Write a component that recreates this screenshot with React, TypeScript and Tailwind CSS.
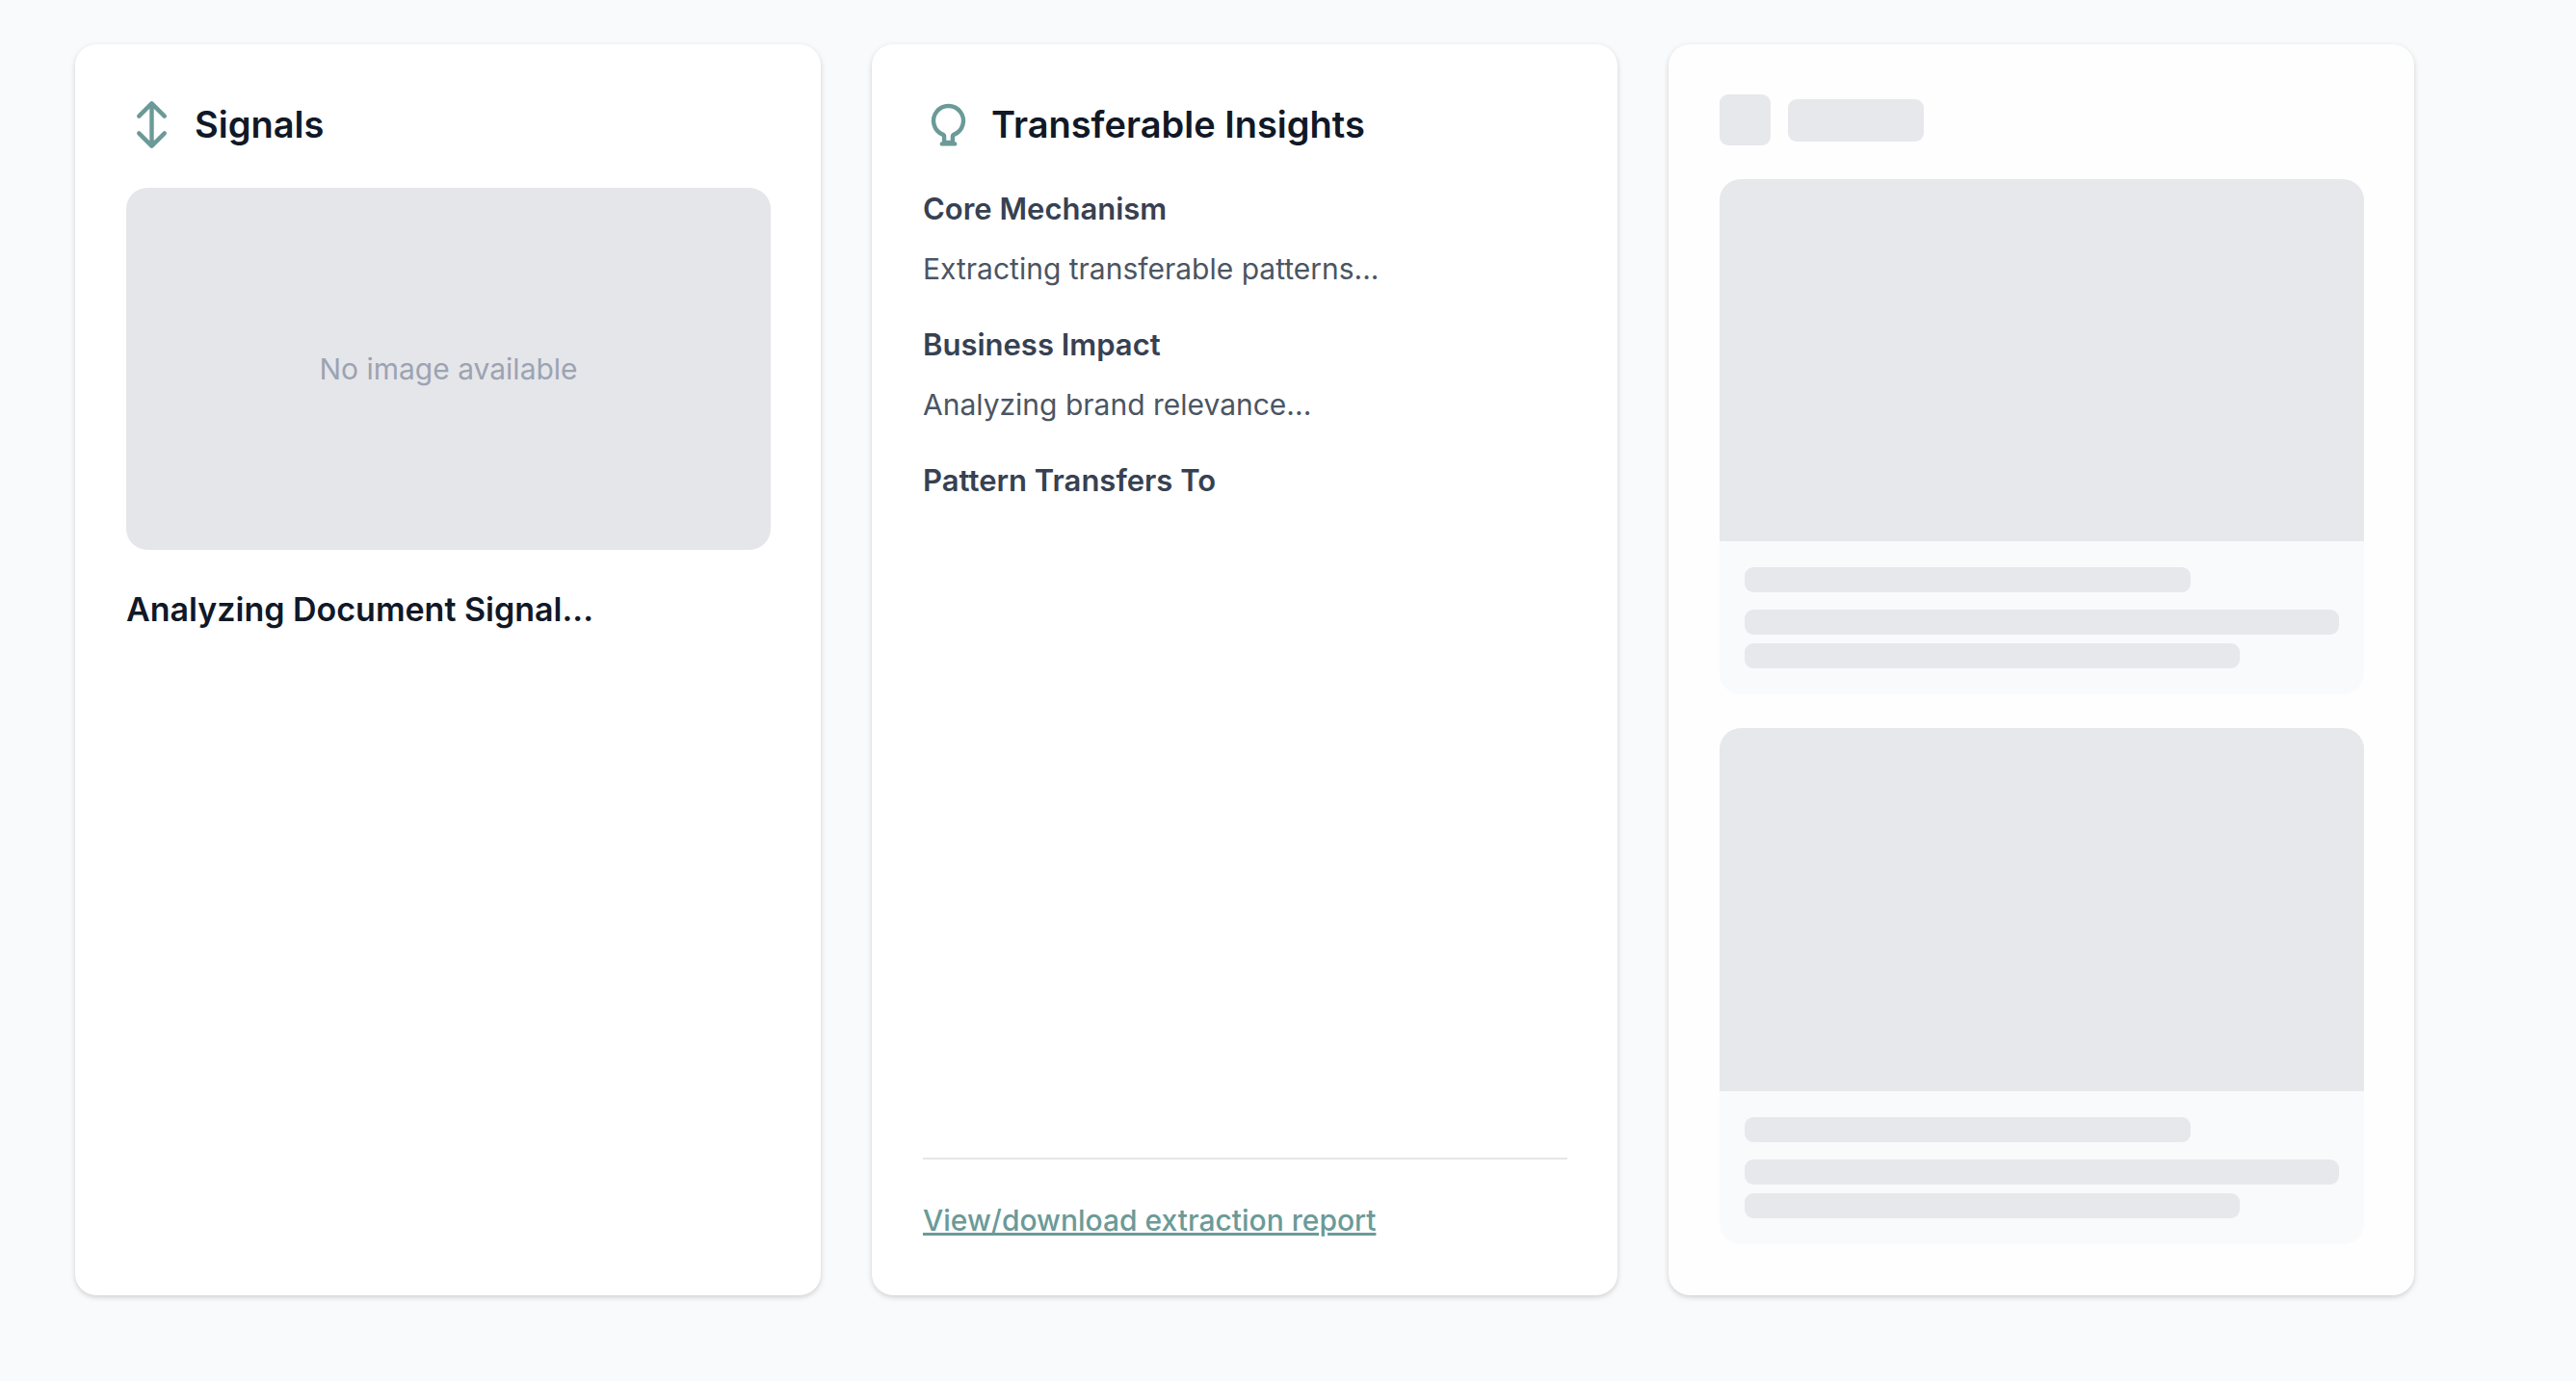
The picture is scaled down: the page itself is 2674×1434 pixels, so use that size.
import React from "react";

function SignalIcon() {
  return (
    <svg viewBox="0 0 24 24" fill="none" stroke="currentColor" strokeWidth="2" strokeLinecap="round" strokeLinejoin="round" className="size-[53px] shrink-0 text-[#6b9a98]" aria-hidden="true">
      <path d="M12 2v20M6 8l6-6 6 6M6 16l6 6 6-6" />
    </svg>
  );
}

function BulbIcon() {
  return (
    <svg viewBox="0 0 24 24" fill="none" stroke="currentColor" strokeWidth="2" strokeLinecap="round" strokeLinejoin="round" className="size-[53px] shrink-0 text-[#6b9a98]" aria-hidden="true">
      <path d="M10 20.4v-2.8c0-.5-.2-.8-.7-1A7 7 0 1 1 14.7 16.6c-.5.2-.7.5-.7 1V20.4z" />
      <path d="M9 21h6" />
    </svg>
  );
}

function Card({ children, className = "" }: { children: React.ReactNode; className?: string }) {
  return (
    <section className={`flex flex-col rounded-[22px] pt-[52px] pr-[52px] pb-[53px] pl-[53px] shadow-[0_2px_7px_rgba(0,0,0,0.1),0_2px_4px_rgba(0,0,0,0.08)] ${className}`}>
      {children}
    </section>
  );
}

function CardTitle({ icon, children }: { icon: React.ReactNode; children: React.ReactNode }) {
  return (
    <header className="mb-[35px] flex items-center gap-[18px]">
      {icon}
      <h2 className="text-[38px] leading-[62px] font-semibold text-[#111827]">{children}</h2>
    </header>
  );
}

function Insight({ title, text }: { title: string; text?: string }) {
  return (
    <div className="flex flex-col gap-[18px] leading-[44px]">
      <h3 className="text-[31px] font-semibold text-[#374151]">{title}</h3>
      {text && <p className="text-[30px] text-[#4b5563]">{text}</p>}
    </div>
  );
}

function SkeletonItem() {
  return (
    <div className="overflow-hidden rounded-[22px] bg-[#f9fafc]">
      <div className="aspect-video bg-[#e7e8ec]" />
      <div className="flex flex-col px-[26px] py-[27px]">
        <div className="mb-[18px] h-[26px] w-3/4 rounded-[9px] bg-[#e7e8ec]" />
        <div className="mb-[9px] h-[26px] w-full rounded-[9px] bg-[#e7e8ec]" />
        <div className="h-[26px] w-5/6 rounded-[9px] bg-[#e7e8ec]" />
      </div>
    </div>
  );
}

export default function App() {
  return (
    <main className="min-h-screen bg-[#f9fafc] pt-[46px] pr-[168px] pb-[88px] pl-[78px] font-['Inter',sans-serif]">
      <div className="grid grid-cols-3 gap-[53px]">
        <Card className="bg-white">
          <CardTitle icon={<SignalIcon />}>Signals</CardTitle>
          <div className="flex aspect-video items-center justify-center rounded-[22px] bg-[#e5e6ea] text-[30px] leading-[44px] text-[#9ca3b2]">
            No image available
          </div>
          <h3 className="mt-[35px] text-[34px] leading-[53px] font-semibold text-[#111827]">Analyzing Document Signal...</h3>
        </Card>

        <Card className="bg-white">
          <CardTitle icon={<BulbIcon />}>Transferable Insights</CardTitle>
          <div className="flex flex-col gap-[35px]">
            <Insight title="Core Mechanism" text="Extracting transferable patterns..." />
            <Insight title="Business Impact" text="Analyzing brand relevance..." />
            <Insight title="Pattern Transfers To" />
          </div>
          <footer className="mt-auto border-t-2 border-[#e5e6ea] pt-[38px] text-[30px] leading-[50px]">
            <a href="#report" className="font-medium text-[#6b9a98] underline decoration-[3px]">
              View/download extraction report
            </a>
          </footer>
        </Card>

        <Card className="bg-[#fefefe]">
          <div className="mb-[35px] flex items-center gap-[18px]">
            <div className="size-[53px] rounded-[9px] bg-[#e7e8ec]" />
            <div className="h-[44px] w-[141px] rounded-[9px] bg-[#e7e8ec]" />
          </div>
          <div className="flex flex-col gap-[35px]">
            <SkeletonItem />
            <SkeletonItem />
          </div>
        </Card>
      </div>
    </main>
  );
}
